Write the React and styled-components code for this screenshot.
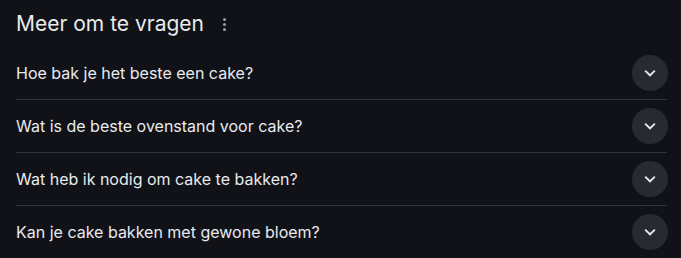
import React from 'react'
import styled, { createGlobalStyle } from 'styled-components'

const Global = createGlobalStyle`
  html, body {
    margin: 0;
    background: #101218;
  }
`

const Container = styled.div`
  width: 681px;
  height: 258px;
  box-sizing: border-box;
  padding: 0 14px 0 16px;
  background: #101218;
  font-family: Inter, "Open Sans", Arial, sans-serif;
  color: #e8eaed;
  overflow: hidden;
`

const Header = styled.div`
  height: 47px;
  display: flex;
  align-items: center;
  gap: 19px;
`

const Title = styled.h2`
  margin: 0;
  font-size: 21px;
  font-weight: 400;
  color: #e8eaed;
`

const MoreButton = styled.div`
  display: flex;
  flex-direction: column;
  gap: 2px;
  padding-top: 2px;
`

const Dot = styled.span`
  width: 3px;
  height: 3px;
  border-radius: 50%;
  background: #9aa0a6;
`

const Row = styled.div`
  height: 52px;
  display: flex;
  align-items: center;
  justify-content: space-between;
  border-bottom: ${p => (p.last ? 'none' : '1px solid #313338')};
`

const Question = styled.span`
  font-size: 16px;
  color: #e8eaed;
`

const Toggle = styled.div`
  width: 36px;
  height: 36px;
  border-radius: 50%;
  background: #272a31;
  display: flex;
  align-items: center;
  justify-content: center;
  margin-right: -1px;
`

const questions = [
  'Hoe bak je het beste een cake?',
  'Wat is de beste ovenstand voor cake?',
  'Wat heb ik nodig om cake te bakken?',
  'Kan je cake bakken met gewone bloem?',
]

const Chevron = () => (
  <svg width="22" height="22" viewBox="0 0 24 24">
    <path d="M7.4 8.6 12 13.2l4.6-4.6L18 10l-6 6-6-6z" fill="#e8eaed" />
  </svg>
)

const App = () => {
  return (
    <Container>
      <Global />
      <Header>
        <Title>Meer om te vragen</Title>
        <MoreButton>
          <Dot />
          <Dot />
          <Dot />
        </MoreButton>
      </Header>
      {questions.map((q, i) => (
        <Row key={q} last={i === questions.length - 1}>
          <Question>{q}</Question>
          <Toggle>
            <Chevron />
          </Toggle>
        </Row>
      ))}
    </Container>
  )
}

export default App
